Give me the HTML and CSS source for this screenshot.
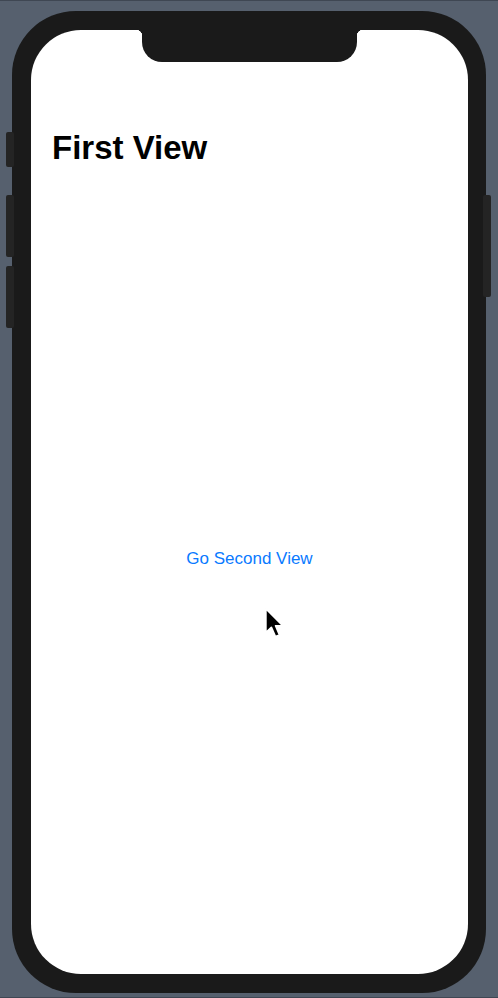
FILE: index.html
```html
<!DOCTYPE html>
<html lang="en">
<head>
<meta charset="utf-8">
<title>First View</title>
<link rel="stylesheet" href="styles.css">
</head>
<body>
<div class="stage">
  <div class="phone">
    <span class="hw-btn hw-mute"></span>
    <span class="hw-btn hw-vol-up"></span>
    <span class="hw-btn hw-vol-down"></span>
    <span class="hw-btn hw-power"></span>
    <div class="screen">
      <div class="notch"></div>
      <h1 class="title">First View</h1>
      <div class="content">
        <a class="link-button" href="#">Go Second View</a>
      </div>
      <svg class="cursor" width="22" height="32" viewBox="0 0 15 22" aria-hidden="true">
        <path d="M1.2 1.2 L1.2 17.6 L5 14 L7.8 20.4 L10.6 19.2 L7.9 12.9 L13 12.9 Z" fill="#000" stroke="#fff" stroke-width="1.2" stroke-linejoin="round"/>
      </svg>
    </div>
  </div>
</div>
</body>
</html>
```
FILE: styles.css
```css
html, body {
  margin: 0;
  padding: 0;
}
body {
  background: #56606e;
  width: 498px;
  height: 998px;
  overflow: hidden;
  font-family: "Liberation Sans", Arial, sans-serif;
}
.stage {
  box-sizing: border-box;
  height: 998px;
  border-top: 1px solid #3f4753;
  border-bottom: 1px solid #3f4753;
  padding: 10px 12px 0 12px;
}
.phone {
  position: relative;
  box-sizing: border-box;
  width: 474px;
  height: 982px;
  background: #1a1a1a;
  border-radius: 64px;
  padding: 19px 18px 19px 19px;
}
.hw-btn {
  position: absolute;
  background: #242424;
  border-radius: 2px;
  width: 8px;
}
.hw-mute { left: -6px; top: 121px; height: 35px; }
.hw-vol-up { left: -6px; top: 184px; height: 62px; }
.hw-vol-down { left: -6px; top: 255px; height: 62px; }
.hw-power { right: -5px; top: 184px; height: 102px; }
.screen {
  position: relative;
  height: 100%;
  background: #fff;
  border-radius: 50px;
  display: flex;
  flex-direction: column;
  overflow: hidden;
}
.notch {
  position: absolute;
  top: 0;
  left: 111px;
  width: 215px;
  height: 32px;
  background: #1a1a1a;
  border-radius: 0 0 20px 20px;
}
.notch::before,
.notch::after {
  content: "";
  position: absolute;
  top: 0;
  width: 6px;
  height: 6px;
}
.notch::before {
  left: -6px;
  background: radial-gradient(circle at 0 100%, transparent 6px, #1a1a1a 6.5px);
}
.notch::after {
  right: -6px;
  background: radial-gradient(circle at 100% 100%, transparent 6px, #1a1a1a 6.5px);
}
.title {
  margin: 0;
  padding: 98px 0 0 21px;
  font-size: 33px;
  line-height: 40px;
  font-weight: 700;
  color: #000;
}
.content {
  flex: 1;
  display: flex;
  align-items: center;
  justify-content: center;
  padding-bottom: 24px;
}
.link-button {
  font-size: 17px;
  line-height: 22px;
  color: #0a7aff;
  text-decoration: none;
}
.cursor {
  position: absolute;
  left: 233px;
  top: 577px;
}
```
